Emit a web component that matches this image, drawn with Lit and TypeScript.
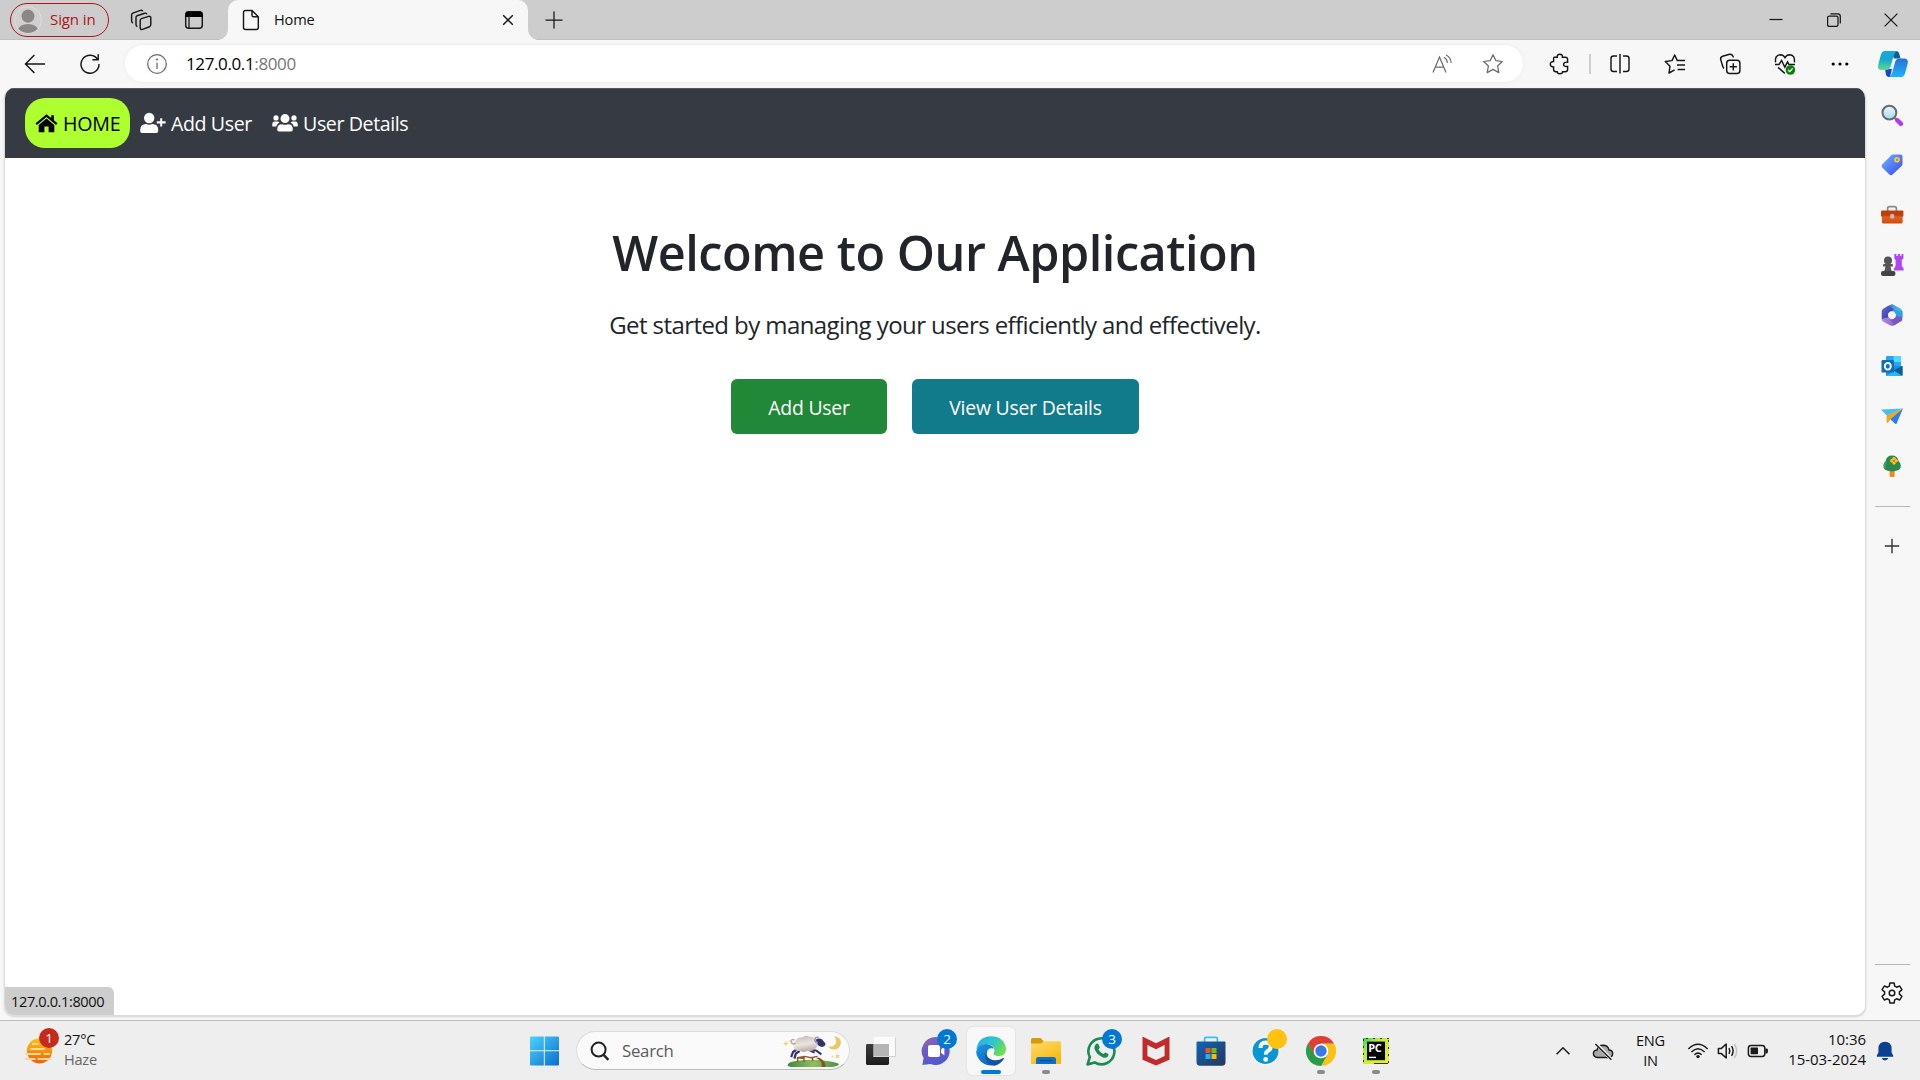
import { LitElement, html, css, svg, TemplateResult, SVGTemplateResult } from "lit";
import { customElement } from "lit/decorators.js";

const icon = (w: number, h: number, body: SVGTemplateResult, cls = ""): TemplateResult =>
  html`<svg class="icon ${cls}" width=${w} height=${h} viewBox="0 0 ${w} ${h}" aria-hidden="true">${body}</svg>`;

/* ---------- tab strip ---------- */
const avatar = icon(28, 28, svg`
  <defs><clipPath id="av"><circle cx="14" cy="14" r="13"/></clipPath></defs>
  <circle cx="14" cy="14" r="13.4" fill="#d2d0ce" stroke="#dedcda"/>
  <g clip-path="url(#av)" fill="#8a8785"><ellipse cx="14" cy="10.2" rx="6.4" ry="6.6"/><ellipse cx="14" cy="24" rx="10" ry="6"/></g>`);
const workspaces = icon(22, 22, svg`<g class="ln b">
  <path d="M11.4 9.6 18.6 7.4Q20.8 7 20.8 9V15.6Q20.8 17 19.4 17.8L12.6 20.4Q10.2 21 10.2 18.8V11.4Q10.2 10 11.4 9.6Z"/>
  <path d="M7.4 17.6Q6 17 6 15.4V8.6Q6 7.2 7.2 6.7L14.6 4.2Q16.6 3.8 17 5.4"/>
  <path d="M3 14Q1.6 13.4 1.6 11.8V6Q1.6 4.6 2.8 4.1L10.4 1.4Q12.4 1 12.8 2.4"/></g>`);
const tabActions = icon(20, 20, svg`<rect x="1.7" y="1.7" width="16.6" height="16.6" rx="3" class="ln b"/>
  <path d="M1.5 7V4.5Q1.5 1.5 4.5 1.5H15.5Q18.5 1.5 18.5 4.5V7Z"/><path class="ln" d="M5 6V18"/>`);
const page = icon(18, 22, svg`<path class="ln b" d="M3.5 1.5H10L16.3 7.8V18.5Q16.3 20.5 14.3 20.5H3.5Q1.5 20.5 1.5 18.5V3.5Q1.5 1.5 3.5 1.5ZM10 1.8V6.2Q10 7.8 11.6 7.8H16"/>`);
const cross = icon(12, 12, svg`<path class="ln b" d="M1.2 1.2 10.8 10.8M10.8 1.2 1.2 10.8"/>`);
const plus = icon(18, 18, svg`<path class="ln" d="M9 .5V17.5M.5 9H17.5"/>`);
const winMin = icon(14, 14, svg`<path class="ln" d="M.5 6.5H13.5"/>`);
const winMax = icon(14, 14, svg`<rect class="ln" x=".6" y="3" width="10.4" height="10.4" rx="1.6"/><path class="ln" d="M3.4 .8H10.6Q13.3 .8 13.3 3.5V10.6"/>`);
const winClose = icon(14, 14, svg`<path class="ln" d="M.6 .6 13.4 13.4M13.4 .6 .6 13.4"/>`);

/* ---------- toolbar ---------- */
const back = icon(22, 20, svg`<path class="ln b" d="M10.4 1 1.5 10 10.4 19M1.5 10H21"/>`);
const reload = icon(22, 22, svg`<path class="ln b" d="M18.7 6.6A9 9 0 1 0 20 11M19.2 1.2V6.8H13.4"/>`);
const info = icon(22, 22, svg`<g class="ln g"><circle cx="11" cy="11" r="9.3"/><path d="M11 9.5V16"/></g><circle cx="11" cy="6.5" r="1.1" fill="#6b6b6b"/>`);
const readAloud = icon(22, 20, svg`<g class="ln g"><path d="M1 18.5 7.5 3 14 18.5M3.2 13H11.8"/><path d="M12 3.2Q15.2 5 15.3 9"/><path d="M14 1Q19 3.5 19.2 9"/></g>`);
const star = icon(22, 22, svg`<path class="ln g" d="M11 1.7 13.8 7.6 20.3 8.5 15.6 13 16.8 19.6 11 16.4 5.2 19.6 6.4 13 1.7 8.5 8.2 7.6Z" stroke-linejoin="round"/>`);
const puzzle = icon(22, 22, svg`<path class="ln b" d="M5 4.2H8.2Q7.8 1.3 10.8 1.3 13.8 1.3 13.4 4.2H16.2Q18.6 4.2 18.6 6.4V9.2Q14.6 8.8 14.6 11.4 14.6 14 18.6 13.4V16.6Q18.6 18.8 16.2 18.8H13.6Q13.6 20.7 10.9 20.7 8.2 20.7 8.2 18.8H6.8Q4.6 18.8 4.6 16.6V14Q1.3 14 1.3 11.2 1.3 8.5 4.6 8.6V6Q4.6 4.2 5 4.2Z"/>`);
const split = icon(20, 22, svg`<path class="ln b" d="M7 3H3.5Q1 3 1 5.5V16Q1 18.5 3.5 18.5H7M13 3H16.5Q19 3 19 5.5V16Q19 18.5 16.5 18.5H13M10 1V20.5"/>`);
const favs = icon(22, 22, svg`<path class="ln b" stroke-linejoin="round" d="M12.6 7.4H13.2L10.7 2 8 7.6 1.3 8.5 6 13.2 5 20 10.6 16.8M13.8 7.5H21M13 12H21M13.6 16.4H21"/>`);
const collections = icon(22, 22, svg`<rect class="ln b" x="7.7" y="7.2" width="13.2" height="13.2" rx="3"/><path class="ln b" d="M14.3 10.2V17.4M10.7 13.8H17.9M5 15.3Q4 14.6 3.6 13L1.7 6.6Q1.2 4 3.6 3.2L10.6 1.3Q13 1 14 3.2L14.5 4.6"/>`);
const health = icon(22, 22, svg`<path class="ln b" d="M1.6 9.4Q.6 1.8 6.6 1.7 9.6 1.8 11 4.6 12.4 1.8 15.4 1.7 21.2 1.8 20.4 9.4M1 11.5H5L7.6 7.4 10.8 14.2 13.6 8.8 15 11.5H21M4 14.4 10.8 20.4"/>
  <circle cx="16.4" cy="17" r="4.8" fill="#107c10"/><path d="M14 17 15.8 18.6 18.6 15.4" fill="none" stroke="#fff" stroke-width="1.2"/>`);
const dots = icon(18, 6, svg`<circle cx="2.2" cy="3" r="1.6"/><circle cx="9" cy="3" r="1.6"/><circle cx="15.8" cy="3" r="1.6"/>`);
const copilot = icon(32, 28, svg`
  <defs>
    <linearGradient id="c1" x1="0" y1="0" x2="0" y2="1"><stop offset="0" stop-color="#1ba5e0"/><stop offset=".45" stop-color="#16a8cc"/><stop offset="1" stop-color="#5bdc8d"/></linearGradient>
    <linearGradient id="c2" x1="0" y1="0" x2="0" y2="1"><stop offset="0" stop-color="#2a6fd6"/><stop offset="1" stop-color="#18b6fb"/></linearGradient></defs>
  <path d="M14 1H19Q21.6 1 22.4 4L23.5 8.5H17Z" fill="#0f5c92"/>
  <path d="M8 19H15L13 27Q9.6 27 9 24.4Z" fill="#1a44cf"/>
  <path d="M8 1H20Q17.6 2.6 16.6 6L13.6 16.5Q12.6 20 9 20H4.5Q0 20 1.3 14.5L3.8 5Q4.8 1 8 1Z" fill="url(#c1)"/>
  <path d="M22.4 8.5H27Q32 8.5 30.6 14L28 23.4Q27 27 23.4 27H12Q14.4 26 15.4 22L18 12.5Q19 8.5 22.4 8.5Z" fill="url(#c2)"/>`);

/* ---------- page ---------- */
const house = icon(23, 20, svg`<path d="M11.5 1.2.6 10.3 1.9 12 11.5 4 21.1 12 22.4 10.3 18.9 7.3V2.2H16.2V5.1ZM11.5 5.6 3.7 12V19.2H9.4V13.6H13.6V19.2H19.3V12Z"/>`);
const userPlus = icon(26, 22, svg`<g fill="#fff"><circle cx="9.2" cy="6" r="5.2"/><path d="M.2 18.2Q.2 12 6 12 9.2 13.4 12.4 12 18.2 12 18.2 18.2V19.2Q18.2 21 16.4 21H2Q.2 21 .2 19.2Z"/><path d="M20.2 6.2H22.2V9.2H25.6V11.4H22.2V14.6H20.2V11.4H16.8V9.2H20.2Z"/></g>`);
const users = icon(26, 20, svg`<g fill="#fff"><circle cx="13" cy="5.6" r="4.5"/><circle cx="4" cy="4.9" r="2.6"/><circle cx="22" cy="4.9" r="2.6"/>
  <path d="M5.2 16.4Q5.2 11.2 10 11.2 13 12.4 16 11.2 20.8 11.2 20.8 16.4 20.8 18.4 19 18.4H7Q5.2 18.4 5.2 16.4Z"/>
  <path d="M.2 12Q.2 8.6 2.8 8.6H5.4Q6.6 8.6 7.4 9.5 4.6 10.8 4.2 13.6H1.4Q.2 13.6.2 12.4ZM25.8 12Q25.8 8.6 23.2 8.6H20.6Q19.4 8.6 18.6 9.5 21.4 10.8 21.8 13.6H24.6Q25.8 13.6 25.8 12.4Z"/></g>`);

/* ---------- sidebar ---------- */
const sideSearch = icon(24, 24, svg`<defs><linearGradient id="lens" x2="0" y2="1"><stop offset="0" stop-color="#e8f6fd"/><stop offset="1" stop-color="#a5daf7"/></linearGradient></defs>
  <path d="M14.6 14.8 17 17.2" stroke="#777" stroke-width="2.4"/><path d="M17.4 17.4 21 20.8" stroke="#b736f2" stroke-width="4.4" stroke-linecap="round"/>
  <circle cx="9.4" cy="9.6" r="6.9" fill="url(#lens)" stroke="#6b6b6b" stroke-width="2"/>`);
const sideTag = icon(24, 24, svg`<defs><linearGradient id="tg" x1="0" y1="0" x2="1" y2="1"><stop offset="0" stop-color="#6fb4ff"/><stop offset="1" stop-color="#3c46f2"/></linearGradient></defs>
  <path d="M13 1.5H20.5Q22.5 1.5 22.5 3.5V11Q22.5 12 21.6 13L12.6 21.6Q11 22.9 9.4 21.6L2.2 14.4Q1 13 2.2 11.6L11 2.6Q12 1.5 13 1.5Z" fill="url(#tg)"/>
  <circle cx="17" cy="6.8" r="2" fill="#8a8fd0" stroke="#ffd21f" stroke-width="1.6"/>`);
const sideTools = icon(24, 24, svg`<defs><linearGradient id="bx" x2="0" y2="1"><stop offset="0" stop-color="#b8410f"/><stop offset=".25" stop-color="#e2601f"/><stop offset="1" stop-color="#d5480e"/></linearGradient></defs>
  <path d="M7.6 8V5.6Q7.6 3.6 9.6 3.6H14.4Q16.4 3.6 16.4 5.6V8" fill="none" stroke="#8a8a8a" stroke-width="1.7"/>
  <rect x="1" y="7.4" width="22.4" height="6.4" rx="1.2" fill="#bd3f0d"/><path d="M2 12H22.6V19Q22.6 20.6 21 20.6H3.6Q2 20.6 2 19Z" fill="url(#bx)"/>
  <rect x="10.2" y="11" width="4" height="4.6" rx="1.4" fill="#bdbdbd"/>`);
const sideGames = icon(24, 24, svg`<path d="M14.4 1H16.4V3H17.8V1H20V3H21.4V1H23.4V5.4L21.8 7V13L23.6 15.4V17.4H13.6L14.4 14.8 15.6 13V7L14.4 5.4Z" fill="#b344f5"/>
  <g fill="#555"><circle cx="8" cy="7.4" r="4"/><rect x="3" y="11" width="10" height="2.6" rx="1.2"/><path d="M5.6 13H10.4L11.6 18H4.4Z"/><rect x="1" y="18" width="14.4" height="5" rx="2" fill="#444"/></g>`);
const side365 = icon(24, 24, svg`<defs><linearGradient id="m1" x2="1" y2="1"><stop offset="0" stop-color="#5a6fe0"/><stop offset="1" stop-color="#3d2b86"/></linearGradient><linearGradient id="m2" x2="1"><stop offset="0" stop-color="#3c72d8"/><stop offset="1" stop-color="#49c7f3"/></linearGradient><linearGradient id="m3" x2="1"><stop offset="0" stop-color="#b18be0"/><stop offset="1" stop-color="#8b5fc8"/></linearGradient></defs>
  <path d="M12 1 20.6 5.5Q22.3 6.5 22.3 8.5V15L15 11.4 12 8 7 8.6 5.5 4.6Z" fill="url(#m2)"/>
  <path d="M9.5 2.2 3.2 5.8Q1.7 6.7 1.7 8.5V16.5L8.4 15.3V10L14 7Z" fill="url(#m1)"/>
  <path d="M1.7 16 8.4 14.2 12 16.2 17 20.5 13.6 22.6Q12 23.4 10.4 22.5L3 18.4Q1.8 17.6 1.7 16Z" fill="url(#m3)"/>
  <path d="M22.3 8.5V16.4Q22.3 17.6 21.2 18.3L14 22.4 11 17 15.6 14.3V9Z" fill="#7a58c4"/>
  <path d="M22.3 8V14L15.6 13V9L12 7Z" fill="#2f9fe6"/><path d="M9.9 8.6H14.1L16.2 12 14.1 15.6H9.9L7.8 12Z" fill="#f5f5f5"/>`);
const sideOutlook = icon(24, 24, svg`<path d="M7 2H20Q21 2 21 3V14H6V3Q6 2 7 2Z" fill="#28a8ea"/><path d="M13.5 2H21V8H13.5Z" fill="#50d9ff"/><path d="M6 8H13.5V14H6Z" fill="#0364b8"/>
  <path d="M6 12H22.5V21Q22.5 22 21.5 22H7Q6 22 6 21Z" fill="#1490df"/><path d="M22.5 12V21.5L13 16.5Z" fill="#0a5a9c"/><path d="M22.2 21.8 14 17 6 22Z" fill="#2fb8f0"/>
  <rect x="1.5" y="6" width="12.5" height="12.6" rx="1.2" fill="#0f6cbd"/><ellipse cx="7.8" cy="12.3" rx="3" ry="3.3" fill="none" stroke="#fff" stroke-width="1.9"/>`);
const sideSend = icon(24, 24, svg`<path d="M23 4.4 16.6 19.4Q16 20.6 14.8 19.6L9 14Z" fill="#2b7de9"/><path d="M1 5.4 23 4.4 7 11.8Z" fill="#43bff2"/><path d="M23 4.4 6.6 11.6V18.2Q6.8 19.6 8 18.4L10.8 15Z" fill="#f2a51d"/>`);
const sideTree = icon(24, 24, svg`<rect x="9.6" y="15" width="5" height="8" rx="1" fill="#f08c1c"/><path d="M12 1.4Q17.6 1.4 18.6 7 21.4 9.6 20.6 13.6 19.4 17.4 12 17.4 4.6 17.4 3.6 13.6 2.8 9.6 5.6 7 6.6 1.4 12 1.4Z" fill="#2b8a4b"/><path d="M5 14Q4 10 6.6 7.6" stroke="#46a866" stroke-width="1.4" fill="none"/>
  <g fill="#ffc328"><circle cx="14" cy="4.6" r="1.7"/><circle cx="14" cy="9" r="1.7"/><circle cx="11.8" cy="6.8" r="1.7"/><circle cx="16.2" cy="6.8" r="1.7"/></g><circle cx="14" cy="6.8" r="1.1" fill="#e66a12"/>`);
const sidePlus = icon(16, 16, svg`<path d="M8 .8V15.2M.8 8H15.2" fill="none" stroke="#333" stroke-width="1.4"/>`);
const gear = icon(24, 24, svg`<path class="ln b" stroke-linejoin="round" d="M9.9 2H14.1L14.7 5.2 16.6 6.2 19.7 5 21.9 8.7 19.4 10.9V13.1L21.9 15.3 19.7 19 16.6 17.8 14.7 18.8 14.1 22H9.9L9.3 18.8 7.4 17.8 4.3 19 2.1 15.3 4.6 13.1V10.9L2.1 8.7 4.3 5 7.4 6.2 9.3 5.2Z"/><circle class="ln b" cx="12" cy="12" r="2.8"/>`);

/* ---------- taskbar ---------- */
const weather = icon(30, 30, svg`<defs><linearGradient id="sun" x2="0" y2="1"><stop offset="0" stop-color="#fdc50c"/><stop offset="1" stop-color="#ee5f0b"/></linearGradient></defs>
  <circle cx="15.5" cy="14.8" r="12.6" fill="url(#sun)"/><g stroke="#f3d79c" stroke-width="2.2" stroke-linecap="round"><path d="M9 8H14M6.6 13H20M2 18H16M20.4 18H25M2 23H10.6M14.4 23H26"/></g>`);
const start = icon(30, 30, svg`<defs><linearGradient id="ws" gradientUnits="userSpaceOnUse" x1="0" y1="0" x2="29" y2="29"><stop offset="0" stop-color="#4fd3fc"/><stop offset="1" stop-color="#0a6fd0"/></linearGradient></defs>
  <path d="M0 1.5Q0 .5 1 .5H13.8V14.3H0ZM14.8.5H28Q29 .5 29 1.5V14.3H14.8ZM0 15.3H13.8V29.5H1Q0 29.5 0 28.5ZM14.8 15.3H29V28.5Q29 29.5 28 29.5H14.8Z" fill="url(#ws)"/>`);
const loupe = icon(20, 20, svg`<circle cx="8.6" cy="8.6" r="7" fill="none" stroke="#222" stroke-width="2"/><path d="M13.6 13.8 18.4 18.8" stroke="#222" stroke-width="2.4"/>`);
const sheep = icon(60, 34, svg`
  <defs><linearGradient id="hill" x2="1"><stop offset="0" stop-color="#3f8a3c"/><stop offset=".5" stop-color="#8fbf63"/><stop offset="1" stop-color="#4b9146"/></linearGradient>
  <linearGradient id="wool" gradientUnits="userSpaceOnUse" x1="20" y1="2" x2="23" y2="20"><stop offset="0" stop-color="#cbbfb6"/><stop offset=".45" stop-color="#ebe5e0"/><stop offset="1" stop-color="#a99a90"/></linearGradient></defs>
  <path d="M4.5 31Q6 27.6 16 26.6 30 24.6 44 27 56 28.6 56 30.6 54 33 48 33H10Q5 33 4.5 31Z" fill="url(#hill)"/>
  <path d="M33 24Q40 27 38.6 33H42.6Q43 27 36 23.4Z" fill="#8a5227"/>
  <path d="M14.6 28V23.8L21 24.6V28M21 26V22.4M29.6 23V27.2M14.6 23.8 21.6 22.4 28 23.8 34.6 22.4" stroke="#93572a" stroke-width="1.4" fill="none"/>
  <path d="M14.5 15 10 18 8.2 23.2M16.6 17 12.8 19.6 11.4 24.6" stroke="#35306f" stroke-width="2.2" stroke-linejoin="round" fill="none"/>
  <path d="M28 15.6 33.4 16.6 38.4 20.4M27 16.6 31.6 18.6" stroke="#35306f" stroke-width="2" fill="none"/>
  <path d="M11.4 14.4Q8.6 9.4 13 6.4 14.6 2.6 19 3.6 22.6.6 26.6 2.8 32 2.2 33.4 7.4 36 12 32 14.8 29.4 18.4 24.6 16.8 20.6 19.4 17 16.8 12.8 17.8 11.4 14.4Z" fill="url(#wool)"/>
  <path d="M12.6 9.6Q8.4 10.6 8 7.2 8.8 4.6 11.6 6.2" fill="none" stroke="#b7aaa1" stroke-width="1.5"/>
  <path d="M33 5.4Q36.4 3.6 39.4 5.8L42.4 9.6Q42.4 12.8 39 13 33.4 12 33 5.4Z" fill="#34306e"/>
  <path d="M35.6 3.4Q32 2.6 31.8 6 32 8.8 35 8.6" fill="none" stroke="#9a93b4" stroke-width="1.6"/>
  <path d="M51.2 2Q58.4 3.2 57.8 9.4 56.4 15.6 50.4 15.4 46.6 15 45.4 12.4 52.6 13 53.2 7.4 53 4.2 51.2 2Z" fill="#e9c765"/>
  <g fill="#f6cf72"><path d="M2.8 6.4 3.6 8.8 6 9.6 3.6 10.4 2.8 12.8 2 10.4 0 9.6 2 8.8ZM7 5.4 7.4 6.6 8.6 7 7.4 7.4 7 8.6 6.6 7.4 5.4 7 6.6 6.6Z"/><circle cx="49.4" cy="22.4" r=".9"/></g><path d="M53 20.8 56 23.8M56 20.8 53 23.8" stroke="#f0c566" stroke-width="1.2"/>`);
const taskView = icon(30, 30, svg`<defs><linearGradient id="tv" x2="0" y2="1"><stop offset="0" stop-color="#3c3c3c"/><stop offset="1" stop-color="#1c1c1c"/></linearGradient></defs>
  <rect y="8" width="23" height="21" rx="1.4" fill="url(#tv)"/><rect x="7.5" y="1" width="22" height="20" rx="1" fill="#fff" opacity=".75"/><path d="M7.5 8H23V21H8.5Q7.5 21 7.5 20Z" fill="#b5b5b5"/><path d="M7.5 20.5H29.5V1.5" fill="none" stroke="#d2d2d2"/>`);
const chat = icon(30, 30, svg`<defs><linearGradient id="ch" x2=".4" y2="1"><stop offset="0" stop-color="#9469b0"/><stop offset=".5" stop-color="#6b5bc4"/><stop offset="1" stop-color="#5358cf"/></linearGradient></defs>
  <path d="M15 1A14 14 0 1 1 9.5 28L1.4 29 2.6 22A14 14 0 0 1 15 1Z" fill="url(#ch)"/><rect x="7" y="9" width="12" height="12" rx="2" fill="#fff"/><path d="M20 13.4 23.4 10.6V19.6L20 16.8Z" fill="#fff"/>`);
const edge = icon(30, 30, svg`<defs><linearGradient id="e1" x2="1" y2=".5"><stop offset="0" stop-color="#2fa8e8"/><stop offset=".55" stop-color="#2fc3cf"/><stop offset="1" stop-color="#6cdf50"/></linearGradient><linearGradient id="e2" x2=".7" y2="1"><stop offset="0" stop-color="#1b9de2"/><stop offset="1" stop-color="#0a60c4"/></linearGradient></defs>
  <path d="M.4 13.6Q2 .4 15.2.2 28 .4 30 12.4 30 19.8 23.2 20 17.4 20 17.6 17.2 19.4 14.8 17.4 11.6 14.8 8 9.6 8 3.2 8.2.4 13.6Z" fill="url(#e1)"/>
  <path d="M.2 15.4Q1.6 8 9.6 8 15 8.2 17.8 12.4 11.4 11 10.2 17.4 9.6 25.6 19.6 29 8.4 31.4 2.4 22.6 0 19.2.2 15.4Z" fill="url(#e2)"/>
  <path d="M11.6 14Q8.8 20.4 14 23 20.4 26 27.4 22 28.6 21.6 28 22.8 24.6 28.4 18.6 29.7 9.4 28 9.3 19.8 9.4 16 11.6 14Z" fill="#15529f"/>`);
const folder = icon(30, 30, svg`<defs><linearGradient id="fo" x2=".6" y2="1"><stop offset="0" stop-color="#ffdc6b"/><stop offset="1" stop-color="#f8b90e"/></linearGradient></defs>
  <path d="M0 3.5Q0 2 1.5 2H9.5L12.5 5V9H0Z" fill="#d89a08"/><path d="M0 7.6H9Q10.4 7.6 11.4 6.6L13 5.2H28.6Q30 5.2 30 6.6V28H0Z" fill="url(#fo)"/>
  <path d="M5 28V23.6Q5 21 7.4 21H22.6Q25 21 25 23.6V28Z" fill="#0f6fc4"/><path d="M8.6 24.6H21.4" stroke="#0a4c90" stroke-width="1.2"/>`);
const whatsapp = icon(30, 30, svg`<path d="M1.6 28.4 3.8 21.2A13 13 0 1 1 8.6 26.4Z" fill="none" stroke="#1b8a53" stroke-width="2.6" stroke-linejoin="round"/>
  <path d="M10 8Q12 7 12.6 8.6L13.8 11.4 12.4 13.4Q14 16.6 17.4 18L19.2 16.4 22 17.8Q23 18.6 22 20.2 20 22.6 16.6 21.2 10.2 18.6 8.4 12.6 8 9.8 10 8Z" fill="#1b8a53"/>`);
const shieldM = icon(28, 30, svg`<path d="M.5.5 14 7.2 27.5.5V23.8L14 29.6.5 23.8Z" fill="#c02b2b"/><path d="M5.4 9 14 13.2 22.6 9V20L14 24 5.4 20Z" fill="#eee"/>`);
const store = icon(30, 30, svg`<defs><linearGradient id="st" x2="1" y2="1"><stop offset="0" stop-color="#0d67b5"/><stop offset="1" stop-color="#28355c"/></linearGradient></defs>
  <path d="M8.6 6V2.8Q8.6 1.4 10 1.4H20Q21.4 1.4 21.4 2.8V6" fill="none" stroke="#35c1f5" stroke-width="1.8"/><path d="M.5 6.4Q.5 5.4 1.5 5.4H28.5Q29.5 5.4 29.5 6.4V26Q29.5 29.8 26 29.8H4Q.5 29.8.5 26Z" fill="url(#st)"/>
  <path d="M9.5 12H14.5V17H9.5Z" fill="#f25022"/><path d="M15.5 12H20.5V17H15.5Z" fill="#7fba00"/><path d="M9.5 18H14.5V23H9.5Z" fill="#1fb1f2"/><path d="M15.5 18H20.5V23H15.5Z" fill="#ffb900"/>`);
const help = icon(30, 30, svg`<circle cx="14.5" cy="15" r="14" fill="#fff"/><circle cx="14.5" cy="15" r="13" fill="#0a96d4"/><path d="M9.6 12Q9.4 6.6 14.8 6.6 20 6.8 19.8 11 19.6 13.6 16.4 15.2 14.8 16.2 14.9 18.6" fill="none" stroke="#fff" stroke-width="4"/><circle cx="14.7" cy="23.4" r="2.4" fill="#fff"/>`);
const chrome = icon(30, 30, svg`<path d="M28 7.5A15 15 0 0 1 15 30L21.5 18.75 15 7.5Z" fill="#fdc116"/><path d="M2 7.5A15 15 0 0 0 15 30L21.5 18.75H9Z" fill="#2a9b4a"/><path d="M2 7.5 8.6 18.9 15 15 15 7.5 28 7.5A15 15 0 0 0 2 7.5Z" fill="#dc3f33"/>
  <circle cx="15" cy="15" r="7.3" fill="#fff"/><circle cx="15" cy="15" r="5.7" fill="#3b78e7"/>`);
const pycharm = icon(28, 28, svg`<defs><linearGradient id="pc" x2="1" y2="1"><stop offset="0" stop-color="#21d75a"/><stop offset=".3" stop-color="#b6ec3a"/><stop offset="1" stop-color="#f4ee2a"/></linearGradient></defs>
  <rect x="1" y="1" width="26" height="26" fill="url(#pc)"/><path d="M1.5 2V26M4 1.5H27M26.5 3V26" stroke="#333" stroke-width="1" stroke-dasharray="2 5"/><path d="M12 26.5H26" stroke="#333"/><rect x="5" y="4.6" width="18" height="18.6" fill="#050505"/><path d="M7 20.4H14" stroke="#fff" stroke-width="1.4"/>
  <text x="6.2" y="14.6" class="pc">PC</text>`);

/* ---------- tray ---------- */
const chevron = icon(16, 10, svg`<path class="tray" d="M1.6 8.2 8 1.8 14.4 8.2"/>`);
const cloud = icon(22, 20, svg`<path d="M5.6 16.5Q1.4 16.3 1.4 12.6 1.5 9.3 5 9 6 4.4 11 4.3 16 4.4 17 9 20.6 9.2 20.7 12.6 20.6 16.4 16.5 16.5Z" fill="#a8a8a8" stroke="#1b1b1b" stroke-width="1.4"/><path d="M4.6 3.2 19.6 18.6" stroke="#eee" stroke-width="3.2"/><path d="M3.4 3 19.4 18.8" stroke="#1b1b1b" stroke-width="1.4"/>`);
const wifi = icon(22, 18, svg`<g class="tray"><path d="M1.4 7Q11-2.4 20.6 7M4.4 10Q11 3.4 17.6 10M7.4 12.8Q11 9.4 14.6 12.8"/></g><circle cx="11" cy="14.6" r="1.7" fill="#1b1b1b"/>`);
const speaker = icon(22, 18, svg`<g class="tray" stroke-linejoin="round"><path d="M1.4 6.4H4.4L9.2 2V16L4.4 11.6H1.4Z"/><path d="M12 6.2Q13.6 9 12 11.8M14.6 4.2Q17.6 9 14.6 13.8"/><path class="dim" d="M17.4 2Q22 9 17.4 16"/></g>`);
const battery = icon(22, 16, svg`<rect class="tray" x="1.4" y="2.4" width="16.4" height="11" rx="2.6"/><rect x="3.6" y="4.6" width="7.4" height="6.6" rx=".6" fill="#1b1b1b"/><path d="M18.4 5.6H20Q21 6 21 8 21 10 20 10.4H18.4Z" fill="#1b1b1b"/>`);
const bell = icon(18, 20, svg`<path d="M9 .8Q15.4 1 15.6 7.4V11.6L17.2 14.6V15.8H.8V14.6L2.4 11.6V7.4Q2.6 1 9 .8ZM5.8 17H12.2Q11.6 19.4 9 19.4 6.4 19.4 5.8 17Z" fill="#0a4192"/>`);

const apps = [
  { art: taskView }, { art: chat, badge: "2" }, { art: edge, state: "active" }, { art: folder, state: "open" },
  { art: whatsapp, badge: "3" }, { art: shieldM }, { art: store }, { art: help, badge: "", tone: "amber" },
  { art: chrome, state: "open" }, { art: pycharm, state: "open" },
];

@customElement("app-root")
export class AppRoot extends LitElement {
  static styles = css`
    :host { display: block; font-family: "Open Sans", "Noto Sans", sans-serif; color: #111; }
    * { box-sizing: border-box; }
    .screen { width: 1920px; height: 1080px; display: flex; flex-direction: column; overflow: hidden; background: #f7f7f7; white-space: nowrap; }
    .icon { display: block; flex: none; }
    .ln { fill: none; stroke: #161616; stroke-width: 1.25; }
    .ln.b { stroke-width: 1.45; }
    .ln.g, .g { stroke: #6b6b6b; }
    .tray { fill: none; stroke: #1b1b1b; stroke-width: 1.5; }
    .dim { stroke: #c4c4c4; }

    .tabs { height: 40px; display: flex; align-items: center; background: #cdcdcd; box-shadow: inset 0 -1px #c0c0c0; padding: 0 0 1px 10px; flex: none; }
    .signin { width: 99px; height: 34px; border: 1.4px solid #ae1519; border-radius: 17px; display: flex; align-items: center; gap: 8px; padding-left: 3px; color: #ae1519; font-size: 15px; letter-spacing: -.1px; }
    .signin span { padding-bottom: 1px; }
    .tools { display: flex; gap: 32px; padding-left: 21px; align-items: center; width: 119px; }
    .tab { position: relative; top: .5px; width: 300px; height: 40px; background: #f7f7f7; border-radius: 10px 10px 0 0; display: flex; align-items: center; padding: 0 14px 0 14px; font-size: 14.6px; letter-spacing: -.2px; }
    .tab::before, .tab::after { content: ""; position: absolute; bottom: 0; width: 10px; height: 10px; }
    .tab::before { left: -10px; background: radial-gradient(circle at 0 0, transparent 9.5px, #f7f7f7 10px); }
    .tab::after { right: -10px; background: radial-gradient(circle at 100% 0, transparent 9.5px, #f7f7f7 10px); }
    .tab span { padding: 0 0 2px 14px; flex: 1; }
    .newtab { margin-left: 17px; }
    .window { margin-left: auto; display: flex; gap: 43.5px; padding-right: 22px; }

    .toolbar { height: 48px; display: flex; align-items: center; flex: none; padding-bottom: 1px; }
    .nav-btns { width: 125px; display: flex; gap: 33px; padding-left: 24px; align-items: center; }
    .address { width: 1398px; height: 37px; border-radius: 19px; background: #fff; box-shadow: 0 0 4px rgba(0,0,0,.06); display: flex; align-items: center; padding: 0 19px 0 21px; }
    .url { flex: 1; padding: 0 0 1px 18px; font-size: 17px; letter-spacing: -.38px; color: #000; }
    .url b { font-weight: 400; color: #767676; }
    .address .icon + .icon { margin-left: 28px; }
    .slot { width: 55px; display: flex; justify-content: center; }
    .slot.first { margin-left: 9px; }
    .slot.last { width: 51px; }
    .rule { width: 5.5px; display: flex; justify-content: center; }
    .rule i { width: 2px; height: 20px; background: #cfcfcf; }

    .middle { flex: 1; display: flex; min-height: 0; }
    .page { position: relative; width: 1862px; height: 928px; margin-left: 4px; border-radius: 10px; background: #fff; border: 1px solid #dcdcdc; border-top: 0; overflow: hidden; display: flex; flex-direction: column; box-shadow: 0 1px 2px rgba(0,0,0,.15); }
    .navbar { height: 70px; background: #363a42; box-shadow: inset 0 1px #55585e; display: flex; align-items: center; padding-left: 20px; color: #fff; font-size: 19.6px; flex: none; letter-spacing: -.4px; }
    .link { display: flex; align-items: center; gap: 5px; }
    .link span { padding-top: 1px; }
    .home { width: 105px; height: 50px; border-radius: 20px; background: #adff2f; color: #000; padding-left: 10px; gap: 5px; margin-right: 10px; letter-spacing: -.2px; }
    .add { width: 132px; }
    .hero { display: flex; flex-direction: column; align-items: center; padding-top: 64px; color: #212529; }
    h1 { margin: 0; font-size: 48.6px; line-height: 60px; font-weight: 600; letter-spacing: -.48px; }
    .lead { margin: 24px 0 0; font-size: 24px; line-height: 38px; letter-spacing: -.58px; font-variant-ligatures: none; }
    .actions { display: flex; gap: 25px; margin-top: 35px; }
    .btn { height: 55px; border-radius: 6px; color: #fff; font-size: 19.4px; letter-spacing: -.22px; display: flex; align-items: center; justify-content: center; padding-top: 2px; }
    .green { width: 156px; background: #218838; }
    .teal { width: 227px; background: #117a8b; }
    .status { position: absolute; left: -1px; bottom: 0; width: 110px; height: 28px; background: #cdcdcd; border-radius: 0 6px 0 0; font-size: 14.6px; letter-spacing: -.4px; line-height: 28px; padding-left: 7px; color: #111; }

    .sidebar { width: 54px; display: flex; flex-direction: column; align-items: center; padding: 2px 2px 0 0; }
    .cell { height: 50.1px; display: flex; align-items: center; }
    .line { width: 35px; height: 1px; background: #b8b8b8; }
    .sidebar .line { margin-top: 15px; }
    .sidebar .more { margin-top: 31px; }
    .sidebar .low { margin-top: auto; }
    .sidebar .gear { padding: 16px 0 15.5px; }

    .taskbar { height: 60px; border-top: 1px solid #bdbdbd; background: #eee; display: flex; align-items: center; position: relative; flex: none; font-size: 14.6px; letter-spacing: -.25px; }
    .weather { width: 530px; display: flex; padding-left: 24px; gap: 10px; align-items: center; }
    .stack { display: flex; flex-direction: column; line-height: 20px; padding-bottom: 2px; }
    .stack.right { text-align: right; }
    .stack.mid { text-align: center; }
    .weather .stack, .clock { padding-bottom: 4px; }
    .muted { color: #666; }
    .art { position: relative; }
    .badge { position: absolute; width: 20px; height: 20px; border-radius: 50%; background: #0078d4; color: #fff; font-size: 13.5px; line-height: 20px; text-align: center; letter-spacing: 0; }
    .red { background: #c42b1c; left: 15px; top: -8px; }
    .search { width: 274px; height: 39px; margin: 0 3px 0 16px; border-radius: 20px; background: #fafafa; border: 1px solid #dcdcdc; border-bottom-color: #bcbcbc; display: flex; align-items: center; padding: 0 6px 0 13px; font-size: 16.8px; color: #5a5a5a; }
    .search span { flex: 1; padding-left: 12px; }
    .app { position: relative; width: 55px; height: 59px; display: flex; align-items: center; justify-content: center; }
    .app .badge { left: 29px; top: 8px; }
    .amber { background: #ffc20e; }
    .app .mark { position: absolute; left: 24px; bottom: 6px; width: 8px; height: 4px; border-radius: 2px; background: #8a8a8a; }
    .tile { width: 48px; height: 48px; border-radius: 6px; display: flex; align-items: center; justify-content: center; }
    .active .tile { background: #f8f8f8; box-shadow: 0 0 1px 1px #e4e4e4; }
    .active .mark { left: 18px; width: 20px; background: #0078d4; }
    .traybar { margin-left: auto; display: flex; align-items: center; padding-right: 26px; }
    .traybar .icon + .icon { margin-left: 8px; }
    .chev { width: 37px; }
    .lang { width: 73px; }
    .clock { width: 97px; margin-right: 10px; font-size: 15px; letter-spacing: -.05px; }
    .pc { font: 700 11px "Open Sans", sans-serif; fill: #fff; }
  `;

  render() {
    return html`<div class="screen">
      <header class="tabs">
        <div class="signin">${avatar}<span>Sign in</span></div>
        <div class="tools">${workspaces}${tabActions}</div>
        <div class="tab">${page}<span>Home</span>${cross}</div>
        <div class="newtab">${plus}</div>
        <div class="window">${winMin}${winMax}${winClose}</div>
      </header>
      <div class="toolbar">
        <div class="nav-btns">${back}${reload}</div>
        <div class="address">${info}<div class="url">127.0.0.1<b>:8000</b></div>${readAloud}${star}</div>
        <div class="slot first">${puzzle}</div><div class="rule"><i></i></div>
        ${[split, favs, collections, health, dots].map((i) => html`<div class="slot">${i}</div>`)}
        <div class="slot last">${copilot}</div>
      </div>
      <div class="middle">
        <main class="page">
          <nav class="navbar">
            <div class="link home">${house}<span>HOME</span></div>
            <div class="link add">${userPlus}<span>Add User</span></div>
            <div class="link">${users}<span>User Details</span></div>
          </nav>
          <section class="hero">
            <h1>Welcome to Our Application</h1>
            <p class="lead">Get started by managing your users efficiently and effectively.</p>
            <div class="actions"><div class="btn green">Add User</div><div class="btn teal">View User Details</div></div>
          </section>
          <div class="status">127.0.0.1:8000</div>
        </main>
        <aside class="sidebar">
          ${[sideSearch, sideTag, sideTools, sideGames, side365, sideOutlook, sideSend, sideTree].map((i) => html`<div class="cell">${i}</div>`)}
          <div class="line"></div><div class="more">${sidePlus}</div>
          <div class="line low"></div><div class="gear">${gear}</div>
        </aside>
      </div>
      <footer class="taskbar">
        <div class="weather"><div class="art">${weather}<div class="badge red">1</div></div>
          <div class="stack"><span>27°C</span><span class="muted">Haze</span></div></div>
        ${start}
        <div class="search">${loupe}<span>Search</span>${sheep}</div>
        ${apps.map((a) => html`<div class="app ${a.state ?? ""}"><div class="tile">${a.art}</div>
          ${a.badge !== undefined ? html`<div class="badge ${a.tone ?? ""}">${a.badge}</div>` : ""}
          ${a.state ? html`<i class="mark"></i>` : ""}</div>`)}
        <div class="traybar">
          <div class="chev">${chevron}</div>${cloud}
          <div class="stack mid lang"><span>ENG</span><span>IN</span></div>
          ${wifi}${speaker}${battery}
          <div class="stack right clock"><span>10:36</span><span>15-03-2024</span></div>
          ${bell}
        </div>
      </footer>
    </div>`;
  }
}
